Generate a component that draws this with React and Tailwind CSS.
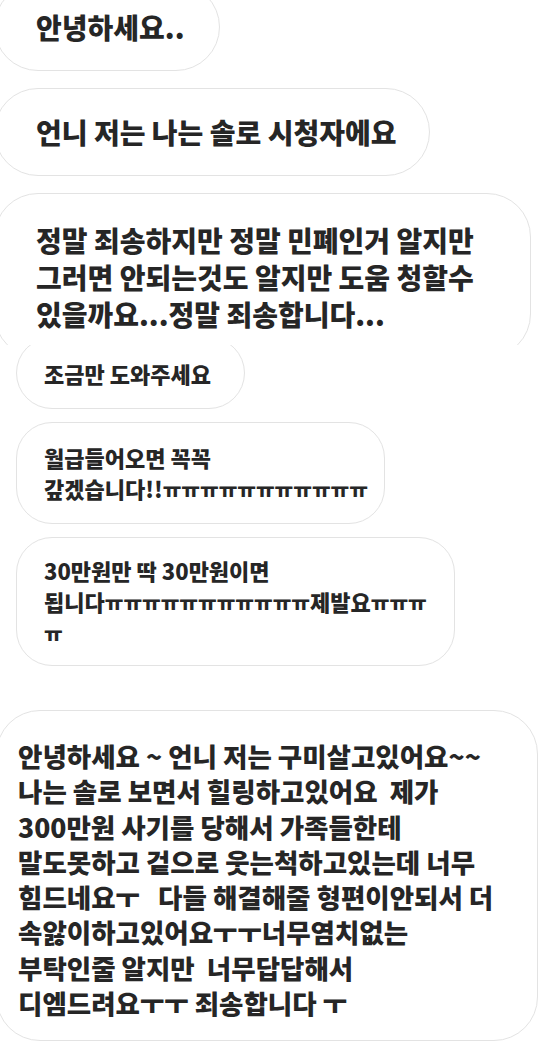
const font = { fontFamily: '"Noto Sans CJK KR", "Noto Sans", sans-serif' };

const Bubble = ({ className = "", children }) => (
  <div
    className={`shrink-0 border border-[#e3e3e3] bg-white font-black text-[#262626] whitespace-pre ${className}`}
  >
    {children}
  </div>
);

const Lines = ({ lines }) =>
  lines.map((line, i) => <div key={i}>{line}</div>);

// ㅠ 연속 부분은 조금 작게
const Cry = ({ n }) => (
  <span className="text-[20.3px] leading-none">{"ㅠ".repeat(n)}</span>
);

export default function App() {
  return (
    <div className="w-[540px] h-[1042px] overflow-hidden bg-white" style={font}>
      {/* 첫 번째 캡처 */}
      <section className="h-[345px] overflow-hidden flex flex-col">
        <Bubble className="ml-[-6px] mt-[-17px] h-[88px] w-[226px] rounded-full pl-[41px] flex items-center text-[28px]">
          안녕하세요..
        </Bubble>
        <Bubble className="ml-[-6px] mt-[17px] h-[88px] w-[436px] rounded-full pl-[41px] flex items-center text-[28px]">
          언니 저는 나는 솔로 시청자에요
        </Bubble>
        <Bubble className="ml-[-6px] mt-[17px] w-[537px] rounded-[44px] pl-[41px] pt-[28px] pb-[24px] text-[28px] leading-[37px]">
          <Lines
            lines={[
              "정말 죄송하지만 정말 민폐인거 알지만",
              "그러면 안되는것도 알지만 도움 청할수",
              "있을까요...정말 죄송합니다...",
            ]}
          />
        </Bubble>
      </section>

      {/* 두 번째 캡처 */}
      <section className="h-[345px] overflow-hidden flex flex-col">
        <Bubble className="ml-[16px] mt-[-8px] h-[72px] w-[229px] rounded-full pl-[27px] flex items-center text-[22px]">
          조금만 도와주세요
        </Bubble>
        <Bubble className="ml-[16px] mt-[13px] w-[369px] rounded-[36px] pl-[27px] py-[19px] text-[22px] leading-[31px]">
          <div>월급들어오면 꼭꼭</div>
          <div>
            갚겠습니다!!<Cry n={11} />
          </div>
        </Bubble>
        <Bubble className="ml-[16px] mt-[13px] w-[439px] rounded-[36px] pl-[27px] py-[17px] text-[22px] leading-[31px]">
          <div>30만원만 딱 30만원이면</div>
          <div>
            됩니다<Cry n={11} />제발요<Cry n={3} />
          </div>
          <div>
            <Cry n={1} />
          </div>
        </Bubble>
      </section>

      {/* 세 번째 캡처 */}
      <section className="flex flex-col">
        <Bubble className="ml-[-4px] mt-[20px] w-[542px] rounded-[44px] pl-[21px] pt-[27px] pb-[20px] text-[26.5px] leading-[35.3px]">
          <Lines
            lines={[
              "안녕하세요 ~ 언니 저는 구미살고있어요~~",
              "나는 솔로 보면서 힐링하고있어요  제가",
              "300만원 사기를 당해서 가족들한테",
              "말도못하고 겉으로 웃는척하고있는데 너무",
              "힘드네요ㅜ   다들 해결해줄 형편이안되서 더",
              "속앓이하고있어요ㅜㅜ너무염치없는",
              "부탁인줄 알지만  너무답답해서",
              "디엠드려요ㅜㅜ 죄송합니다 ㅜ",
            ]}
          />
        </Bubble>
      </section>
    </div>
  );
}
